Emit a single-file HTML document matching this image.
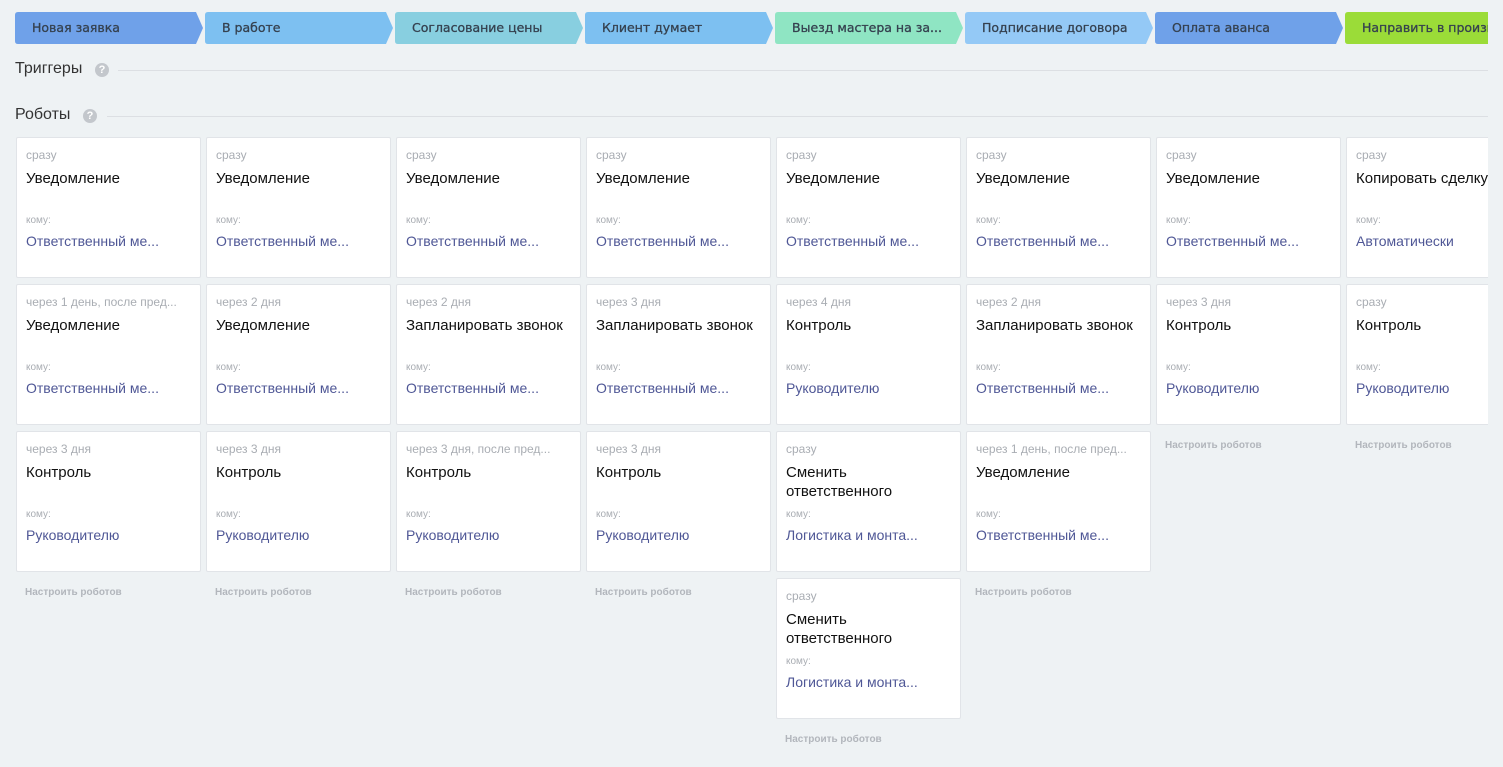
<!DOCTYPE html>
<html><head><meta charset="utf-8"><style>
*{margin:0;padding:0;box-sizing:border-box}
body{width:1503px;height:767px;background:#eef2f4;font-family:"Liberation Sans",Arial,sans-serif;position:relative;overflow:hidden}
#wrap{position:absolute;left:0;top:0;width:1488px;height:767px;overflow:hidden}
.st{position:absolute;top:12px;height:32px;}
.st svg{position:absolute;left:0;top:0}
.st span{position:absolute;left:17px;top:0;line-height:32px;color:#35414f;white-space:nowrap;font-family:"DejaVu Sans","Liberation Sans",sans-serif;font-size:12.5px;font-weight:normal;-webkit-text-stroke:0.3px #35414f}
.h{position:absolute;left:15px;font-size:16px;color:#333;}
.q{position:absolute;width:14px;height:14px;border-radius:50%;background:#c3c7cc;color:#fff;font-size:11px;font-weight:bold;text-align:center;line-height:14px}
.ln{position:absolute;height:1px;background:#dcdfe3;right:0}
.c{position:absolute;width:185px;height:141px;background:#fff;border:1px solid #e1e4e8;border-radius:2px}
.c .a{position:absolute;left:9px;top:10px;font-size:12px;color:#a9adb3;white-space:nowrap}
.c .t{position:absolute;left:9px;top:31px;font-size:15px;color:#111;line-height:19px;width:170px}
.c .k{position:absolute;left:9px;top:77px;font-size:10px;color:#a9adb3}
.c .l{position:absolute;left:9px;top:95px;font-size:14px;color:#4f5796;white-space:nowrap}
.n{position:absolute;font-size:10px;color:#b2b6bc;font-weight:bold}
</style></head><body><div id="wrap">

<div class="st" style="left:15px"><svg width="190" height="32"><path d="M3 0H181L188 16L181 32H3Q0 32 0 29V3Q0 0 3 0Z" fill="#6fa1e9"/></svg><span>Новая заявка</span></div>
<div class="st" style="left:205px"><svg width="190" height="32"><path d="M3 0H181L188 16L181 32H3Q0 32 0 29V3Q0 0 3 0Z" fill="#7dc0f1"/></svg><span>В работе</span></div>
<div class="st" style="left:395px"><svg width="190" height="32"><path d="M3 0H181L188 16L181 32H3Q0 32 0 29V3Q0 0 3 0Z" fill="#88cfe0"/></svg><span>Согласование цены</span></div>
<div class="st" style="left:585px"><svg width="190" height="32"><path d="M3 0H181L188 16L181 32H3Q0 32 0 29V3Q0 0 3 0Z" fill="#7dc0f1"/></svg><span>Клиент думает</span></div>
<div class="st" style="left:775px"><svg width="190" height="32"><path d="M3 0H181L188 16L181 32H3Q0 32 0 29V3Q0 0 3 0Z" fill="#8fe5c3"/></svg><span>Выезд мастера на за...</span></div>
<div class="st" style="left:965px"><svg width="190" height="32"><path d="M3 0H181L188 16L181 32H3Q0 32 0 29V3Q0 0 3 0Z" fill="#94c9f6"/></svg><span>Подписание договора</span></div>
<div class="st" style="left:1155px"><svg width="190" height="32"><path d="M3 0H181L188 16L181 32H3Q0 32 0 29V3Q0 0 3 0Z" fill="#6fa1e9"/></svg><span>Оплата аванса</span></div>
<div class="st" style="left:1345px"><svg width="190" height="32"><path d="M3 0H181L188 16L181 32H3Q0 32 0 29V3Q0 0 3 0Z" fill="#9bdc38"/></svg><span>Направить в производство</span></div>

<div class="h" style="top:60px">Триггеры</div><div class="q" style="left:95px;top:63px">?</div><div class="ln" style="left:118px;top:70px"></div>
<div class="h" style="top:106px">Роботы</div><div class="q" style="left:83px;top:109px">?</div><div class="ln" style="left:107px;top:116px"></div>

<div class="c" style="left:16px;top:137px"><div class="a">сразу</div><div class="t">Уведомление</div><div class="k">кому:</div><div class="l">Ответственный ме...</div></div>
<div class="c" style="left:16px;top:284px"><div class="a">через 1 день, после пред...</div><div class="t">Уведомление</div><div class="k">кому:</div><div class="l">Ответственный ме...</div></div>
<div class="c" style="left:16px;top:431px"><div class="a">через 3 дня</div><div class="t">Контроль</div><div class="k">кому:</div><div class="l">Руководителю</div></div>
<div class="n" style="left:25px;top:587px">Настроить роботов</div>

<div class="c" style="left:206px;top:137px"><div class="a">сразу</div><div class="t">Уведомление</div><div class="k">кому:</div><div class="l">Ответственный ме...</div></div>
<div class="c" style="left:206px;top:284px"><div class="a">через 2 дня</div><div class="t">Уведомление</div><div class="k">кому:</div><div class="l">Ответственный ме...</div></div>
<div class="c" style="left:206px;top:431px"><div class="a">через 3 дня</div><div class="t">Контроль</div><div class="k">кому:</div><div class="l">Руководителю</div></div>
<div class="n" style="left:215px;top:587px">Настроить роботов</div>

<div class="c" style="left:396px;top:137px"><div class="a">сразу</div><div class="t">Уведомление</div><div class="k">кому:</div><div class="l">Ответственный ме...</div></div>
<div class="c" style="left:396px;top:284px"><div class="a">через 2 дня</div><div class="t">Запланировать звонок</div><div class="k">кому:</div><div class="l">Ответственный ме...</div></div>
<div class="c" style="left:396px;top:431px"><div class="a">через 3 дня, после пред...</div><div class="t">Контроль</div><div class="k">кому:</div><div class="l">Руководителю</div></div>
<div class="n" style="left:405px;top:587px">Настроить роботов</div>

<div class="c" style="left:586px;top:137px"><div class="a">сразу</div><div class="t">Уведомление</div><div class="k">кому:</div><div class="l">Ответственный ме...</div></div>
<div class="c" style="left:586px;top:284px"><div class="a">через 3 дня</div><div class="t">Запланировать звонок</div><div class="k">кому:</div><div class="l">Ответственный ме...</div></div>
<div class="c" style="left:586px;top:431px"><div class="a">через 3 дня</div><div class="t">Контроль</div><div class="k">кому:</div><div class="l">Руководителю</div></div>
<div class="n" style="left:595px;top:587px">Настроить роботов</div>

<div class="c" style="left:776px;top:137px"><div class="a">сразу</div><div class="t">Уведомление</div><div class="k">кому:</div><div class="l">Ответственный ме...</div></div>
<div class="c" style="left:776px;top:284px"><div class="a">через 4 дня</div><div class="t">Контроль</div><div class="k">кому:</div><div class="l">Руководителю</div></div>
<div class="c" style="left:776px;top:431px"><div class="a">сразу</div><div class="t">Сменить ответственного</div><div class="k">кому:</div><div class="l">Логистика и монта...</div></div>
<div class="c" style="left:776px;top:578px"><div class="a">сразу</div><div class="t">Сменить ответственного</div><div class="k">кому:</div><div class="l">Логистика и монта...</div></div>
<div class="n" style="left:785px;top:734px">Настроить роботов</div>

<div class="c" style="left:966px;top:137px"><div class="a">сразу</div><div class="t">Уведомление</div><div class="k">кому:</div><div class="l">Ответственный ме...</div></div>
<div class="c" style="left:966px;top:284px"><div class="a">через 2 дня</div><div class="t">Запланировать звонок</div><div class="k">кому:</div><div class="l">Ответственный ме...</div></div>
<div class="c" style="left:966px;top:431px"><div class="a">через 1 день, после пред...</div><div class="t">Уведомление</div><div class="k">кому:</div><div class="l">Ответственный ме...</div></div>
<div class="n" style="left:975px;top:587px">Настроить роботов</div>

<div class="c" style="left:1156px;top:137px"><div class="a">сразу</div><div class="t">Уведомление</div><div class="k">кому:</div><div class="l">Ответственный ме...</div></div>
<div class="c" style="left:1156px;top:284px"><div class="a">через 3 дня</div><div class="t">Контроль</div><div class="k">кому:</div><div class="l">Руководителю</div></div>
<div class="n" style="left:1165px;top:440px">Настроить роботов</div>

<div class="c" style="left:1346px;top:137px"><div class="a">сразу</div><div class="t" style="white-space:nowrap">Копировать сделку</div><div class="k">кому:</div><div class="l">Автоматически</div></div>
<div class="c" style="left:1346px;top:284px"><div class="a">сразу</div><div class="t">Контроль</div><div class="k">кому:</div><div class="l">Руководителю</div></div>
<div class="n" style="left:1355px;top:440px">Настроить роботов</div>

</div></body></html>
